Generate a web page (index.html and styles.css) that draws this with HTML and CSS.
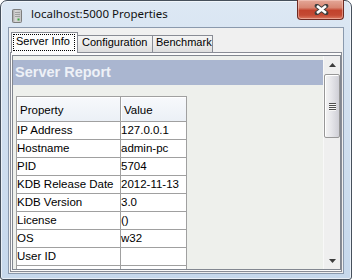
FILE: index.html
```html
<!DOCTYPE html>
<html>
<head>
<meta charset="utf-8">
<link rel="stylesheet" href="styles.css">
</head>
<body>
<div class="window">
  <div class="titlebar">
    <svg class="app-icon" width="10" height="14" viewBox="0 0 10 14">
      <defs>
        <linearGradient id="ig" x1="0" y1="0" x2="1" y2="0">
          <stop offset="0" stop-color="#9a9a9a"/>
          <stop offset="0.3" stop-color="#d8d8d8"/>
          <stop offset="1" stop-color="#c4c4c4"/>
        </linearGradient>
      </defs>
      <rect x="0.5" y="0.5" width="9" height="13" rx="1" fill="url(#ig)" stroke="#7d7d7d"/>
      <path d="M3 3.5h5M3 5.5h5M3 7.5h5" stroke="#a0a0a0"/>
      <rect x="5.5" y="9.5" width="2" height="2" fill="#3ca640"/>
    </svg>
    <span class="title">localhost:5000 Properties</span>
    <div class="close">
      <svg width="15" height="11" viewBox="0 0 15 11">
        <path d="M3 2 L12 9 M12 2 L3 9" stroke="#3e3e3e" stroke-width="4.6" stroke-linecap="round"/>
        <path d="M3 2 L12 9 M12 2 L3 9" stroke="#ffffff" stroke-width="2.6"/>
      </svg>
    </div>
  </div>
  <div class="client">
    <div class="tabs">
      <div class="tab tab-active"><span class="focus">Server Info</span></div>
      <div class="tab tab-config">Configuration</div>
      <div class="tab tab-bench">Benchmark</div>
    </div>
    <div class="panel">
      <div class="scrollpane">
        <div class="viewport">
          <div class="report-header">Server Report</div>
          <table class="props">
            <tr class="head"><th class="c1">Property</th><th class="c2">Value</th></tr>
            <tr><td>IP Address</td><td>127.0.0.1</td></tr>
            <tr><td>Hostname</td><td>admin-pc</td></tr>
            <tr><td>PID</td><td>5704</td></tr>
            <tr><td>KDB Release Date</td><td>2012-11-13</td></tr>
            <tr><td>KDB Version</td><td>3.0</td></tr>
            <tr><td>License</td><td>()</td></tr>
            <tr><td>OS</td><td>w32</td></tr>
            <tr><td>User ID</td><td></td></tr>
            <tr><td></td><td></td></tr>
          </table>
        </div>
        <div class="vscroll">
          <div class="sb-btn">
            <svg width="7" height="4" viewBox="0 0 7 4"><path d="M0 4 L3.5 0 L7 4 Z" fill="#3c3c3c"/></svg>
          </div>
          <div class="thumb">
            <div class="grip"></div>
            <div class="grip"></div>
            <div class="grip"></div>
            <div class="grip"></div>
          </div>
          <div class="sb-fill"></div>
          <div class="sb-btn">
            <svg width="7" height="4" viewBox="0 0 7 4"><path d="M0 0 L7 0 L3.5 4 Z" fill="#3c3c3c"/></svg>
          </div>
        </div>
      </div>
    </div>
  </div>
</div>
</body>
</html>
```

FILE: styles.css
```css
* { box-sizing: border-box; }
html, body { margin: 0; padding: 0; }
body {
  width: 352px;
  height: 280px;
  overflow: hidden;
  background: #ffffff;
  font-family: "Liberation Sans", Arial, sans-serif;
}
.window {
  width: 352px;
  height: 280px;
  border: 1px solid #46505c;
  border-radius: 7px 7px 3px 3px;
  background: linear-gradient(180deg, #dde8f4 0%, #d3e1f0 30%, #c6d8ec 100%);
  box-shadow: inset 0 0 0 1px rgba(255,255,255,0.6);
  padding: 0 7px 5px 7px;
  display: flex;
  flex-direction: column;
}
.titlebar {
  height: 26px;
  flex: none;
  display: flex;
  align-items: flex-start;
}
.app-icon {
  margin: 8px 0 0 4px;
  flex: none;
}
.title {
  margin: 5px 0 0 9px;
  font-family: "Noto Sans", "Open Sans", sans-serif;
  font-size: 11.5px;
  line-height: 16px;
  color: #111;
  white-space: nowrap;
}
.close {
  margin-left: auto;
  margin-top: -1px;
  width: 47px;
  height: 20px;
  border: 1px solid #6e2a22;
  border-top: none;
  border-radius: 0 0 4px 4px;
  background: linear-gradient(180deg, #e4a898 0%, #d88672 40%, #c2422c 55%, #c44a34 80%, #dc7a62 100%);
  box-shadow: inset 0 0 0 1px rgba(255,220,210,0.45);
  display: flex;
  align-items: center;
  justify-content: center;
  padding-left: 2px;
}
.client {
  flex: 1;
  border: 1px solid #8a99ad;
  background: #f0f0f0;
  padding: 4px 1px 1px 1px;
  display: flex;
  flex-direction: column;
}
.tabs {
  height: 20px;
  flex: none;
  display: flex;
  align-items: flex-end;
  padding-left: 1px;
  font-size: 11px;
  color: #000;
}
.tab {
  border: 1px solid #898c95;
  border-bottom: none;
  white-space: nowrap;
}
.tab-active {
  width: 67px;
  height: 21px;
  margin-bottom: -1px;
  background: #fcfcfc;
  position: relative;
  z-index: 1;
  padding: 1px 0 0 1px;
}
.focus {
  display: block;
  width: 62px;
  height: 17px;
  border: 1px dotted #000;
  padding-left: 2px;
  line-height: 13px;
}
.tab-config, .tab-bench {
  height: 17px;
  margin-left: -1px;
  line-height: 13px;
  background: linear-gradient(180deg, #f4f4f4 0%, #ebebeb 50%, #dedede 100%);
}
.tab-config { width: 76px; padding-left: 4px; }
.tab-bench { width: 61px; padding-left: 3px; }
.panel {
  height: 220px;
  flex: none;
  border: 1px solid #898c95;
  background: #fbfbfb;
  padding: 2px 0 1px 1px;
  display: flex;
}
.scrollpane {
  flex: 1;
  border: 1px solid #828790;
  display: flex;
  overflow: hidden;
}
.viewport {
  flex: 1;
  background: #eef0ec;
  padding-top: 4px;
  overflow: hidden;
}
.report-header {
  height: 25px;
  background: #aab6d0;
  color: #eef1f7;
  font-weight: bold;
  font-size: 14.5px;
  line-height: 25px;
  padding-left: 2px;
}
.props {
  margin: 11px 0 0 3px;
  border-collapse: separate;
  border-spacing: 0;
  border-left: 1px solid #a0a0a0;
  border-top: 1px solid #a0a0a0;
  font-size: 11.5px;
  color: #000;
  background: #fff;
}
.props th, .props td {
  border-right: 1px solid #a0a0a0;
  border-bottom: 1px solid #a0a0a0;
  text-align: left;
  font-weight: normal;
  white-space: nowrap;
  vertical-align: top;
}
.props td {
  height: 18px;
  line-height: 17px;
  padding: 0;
}
.props th {
  height: 25px;
  line-height: 22px;
  padding: 2px 0 0 3px;
  background: linear-gradient(180deg, #f7f9fc 0%, #ebf0f6 100%);
  box-shadow: inset 1px 1px 0 #ffffff;
}
.props .c1 { width: 104px; }
.props .c2 { width: 66px; }
.vscroll {
  width: 17px;
  flex: none;
  background: #efefef;
  border-left: 1px solid #f8f8f8;
  display: flex;
  flex-direction: column;
}
.sb-btn {
  height: 17px;
  flex: none;
  display: flex;
  align-items: center;
  justify-content: center;
}
.thumb {
  margin: 1px 0 0 0;
  width: 16px;
  height: 64px;
  flex: none;
  border: 1px solid #979797;
  border-radius: 2px;
  background: linear-gradient(90deg, #f4f4f4 0%, #e6e6ea 45%, #cfcfd6 100%);
  box-shadow: inset 1px 1px 0 #ffffff;
  display: flex;
  flex-direction: column;
  align-items: center;
  justify-content: center;
  gap: 1px;
}
.grip {
  width: 7px;
  height: 1px;
  background: #4f4f4f;
  box-shadow: 0 1px 0 #f6f6f6;
}
.sb-fill { flex: 1; }
```
